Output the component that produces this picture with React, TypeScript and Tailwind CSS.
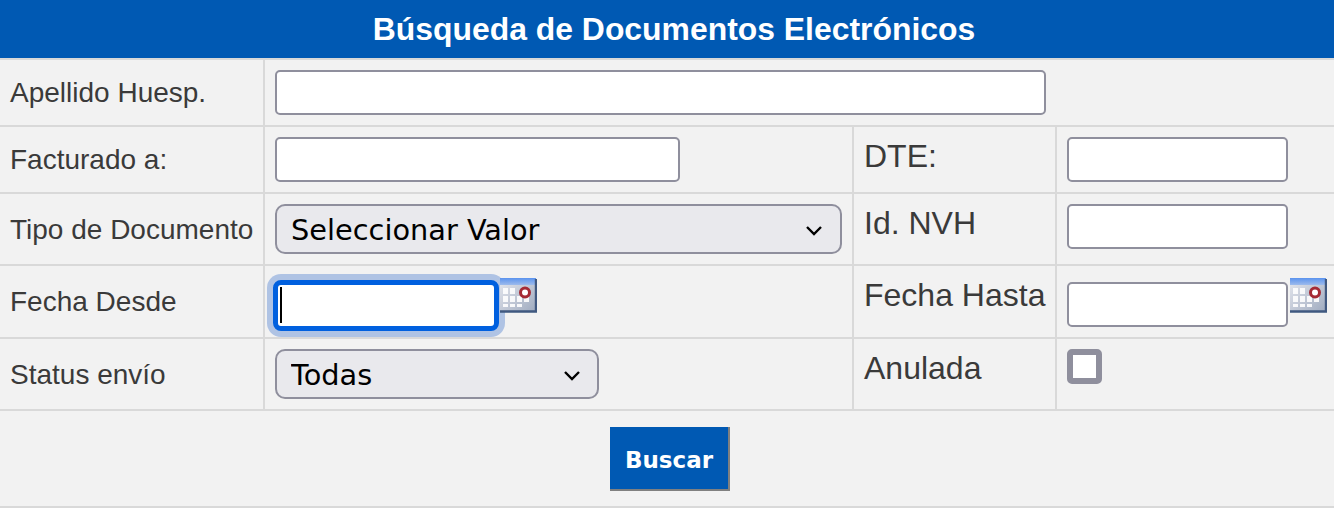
const LABEL_LEFT = "flex items-center border-r-2 border-b-2 border-[#d9d9d9] pl-[10px] pt-[1px] text-[28px] text-[#3a3a3a]";
const LABEL_RIGHT = "border-r-2 border-b-2 border-[#d9d9d9] pl-[10px] pt-[9px] text-[32px] leading-[40px] text-[#3a3a3a]";
const CELL = "flex border-b-2 border-[#d9d9d9]";
const INPUT = "h-[45px] rounded-[5px] border-2 border-[#8f8f9d] bg-white";

function CalendarIcon() {
  return (
    <svg width="37" height="36" viewBox="0 0 37 36" className="shrink-0">
      <defs>
        <linearGradient id="calBody" x1="0" y1="0" x2="1" y2="1">
          <stop offset="0" stopColor="#e6e8ee" />
          <stop offset="1" stopColor="#9eaabf" />
        </linearGradient>
        <linearGradient id="calTop" x1="0" y1="0" x2="0" y2="1">
          <stop offset="0" stopColor="#5b93ee" />
          <stop offset="1" stopColor="#9dbbec" />
        </linearGradient>
        <filter id="calSoft">
          <feGaussianBlur stdDeviation="0.7" />
        </filter>
      </defs>
      <g filter="url(#calSoft)">
        <rect x="0" y="0" width="36" height="34" fill="url(#calBody)" />
        <rect x="0" y="0" width="36" height="7" fill="url(#calTop)" />
        <g fill="#ffffff" opacity="0.9">
          <rect x="3" y="10" width="5" height="6" />
          <rect x="10" y="10" width="5" height="6" />
          <rect x="3" y="18" width="5" height="6" />
          <rect x="10" y="18" width="5" height="6" />
          <rect x="17" y="18" width="5" height="6" />
          <rect x="24" y="18" width="5" height="6" />
          <rect x="3" y="26" width="5" height="3" />
          <rect x="10" y="26" width="5" height="3" />
          <rect x="17" y="26" width="5" height="3" />
        </g>
        <circle cx="25" cy="14.5" r="4.5" fill="#fff" stroke="#a52a35" strokeWidth="3" />
        <path d="M36 1V33.5H0" fill="none" stroke="#3f5880" strokeWidth="2.4" />
      </g>
    </svg>
  );
}

function Select({ label, width, chevronRight }: { label: string; width: string; chevronRight: string }) {
  return (
    <div className={`relative h-[50px] ${width}`}>
      <select
        defaultValue={label}
        className="h-full w-full appearance-none rounded-[10px] border-2 border-[#8f8f9d] bg-[#e9e9ed] pl-[14px] pt-[2px] text-[28.8px] leading-[44px] text-black [font-family:'DejaVu_Sans',sans-serif]"
      >
        <option>{label}</option>
      </select>
      <svg width="18" height="11" viewBox="0 0 18 11" className={`pointer-events-none absolute top-[21px] ${chevronRight}`}>
        <path d="M2 2l7 7 7-7" fill="none" stroke="#000" strokeWidth="2.4" />
      </svg>
    </div>
  );
}

export default function App() {
  return (
    <div className="bg-white h-[511px] [font-family:'Liberation_Sans',Arial,sans-serif]">
      <div className="bg-[#f2f2f2]">
        <h1 className="flex h-[58px] items-center justify-center bg-[#0059b3] pl-[14px] pt-[2px] text-[31.9px] font-bold text-white">
          Búsqueda de Documentos Electrónicos
        </h1>
        <div className="grid grid-cols-[265px_589px_203px_1fr] grid-rows-[67px_67px_72px_73px_72px] border-t-2 border-[#d9d9d9]">
          <div className={LABEL_LEFT}>Apellido Huesp.</div>
          <div className={`${CELL} col-span-3 pl-[10px] pt-[10px]`}>
            <input className={`${INPUT} w-[771px]`} />
          </div>

          <div className={LABEL_LEFT}>Facturado a:</div>
          <div className={`${CELL} border-r-2 pl-[10px] pt-[10px]`}>
            <input className={`${INPUT} w-[405px]`} />
          </div>
          <div className={LABEL_RIGHT}>DTE:</div>
          <div className={`${CELL} pl-[10px] pt-[10px]`}>
            <input className={`${INPUT} w-[221px]`} />
          </div>

          <div className={LABEL_LEFT}>Tipo de Documento</div>
          <div className={`${CELL} border-r-2 pl-[10px] pt-[10px]`}>
            <Select label="Seleccionar Valor" width="w-[567px]" chevronRight="right-[19px]" />
          </div>
          <div className={LABEL_RIGHT}>Id. NVH</div>
          <div className={`${CELL} pl-[10px] pt-[10px]`}>
            <input className={`${INPUT} w-[221px]`} />
          </div>

          <div className={LABEL_LEFT}>Fecha Desde</div>
          <div className={`${CELL} border-r-2 pl-[10px] pt-[12px]`}>
            <div className="relative ml-[-2px] mt-[2px] h-[51px] w-[226px] rounded-[8px] bg-white border-[5px] border-[#0060df] ring-[6px] ring-[#afc3e4]">
              <span className="absolute left-[2px] top-[2px] h-[36px] w-[2px] bg-black" />
            </div>
            <div className="relative ml-[1px]">
              <CalendarIcon />
            </div>
          </div>
          <div className={LABEL_RIGHT}>Fecha Hasta</div>
          <div className={`${CELL} pl-[10px] pt-[12px]`}>
            <input className={`${INPUT} mt-[4px] w-[221px]`} />
            <div className="ml-[2px]">
              <CalendarIcon />
            </div>
          </div>

          <div className={LABEL_LEFT}>Status envío</div>
          <div className={`${CELL} border-r-2 pl-[10px] pt-[10px]`}>
            <Select label="Todas" width="w-[324px]" chevronRight="right-[18px]" />
          </div>
          <div className={LABEL_RIGHT}>Anulada</div>
          <div className={`${CELL} pl-[10px] pt-[10px]`}>
            <span className="h-[35px] w-[35px] rounded-[5px] border-[6px] border-[#8f8f9d] bg-white" />
          </div>
        </div>
        <div className="flex h-[97px] justify-center border-b-2 border-[#d9d9d9] pt-[16px] pl-[6px]">
          <button className="h-[64px] w-[120px] border-r-2 border-b-2 border-[#808080] bg-[#0059b3] pt-[5px] text-[23px] font-bold text-white [font-family:'DejaVu_Sans',sans-serif]">
            Buscar
          </button>
        </div>
      </div>
    </div>
  );
}
